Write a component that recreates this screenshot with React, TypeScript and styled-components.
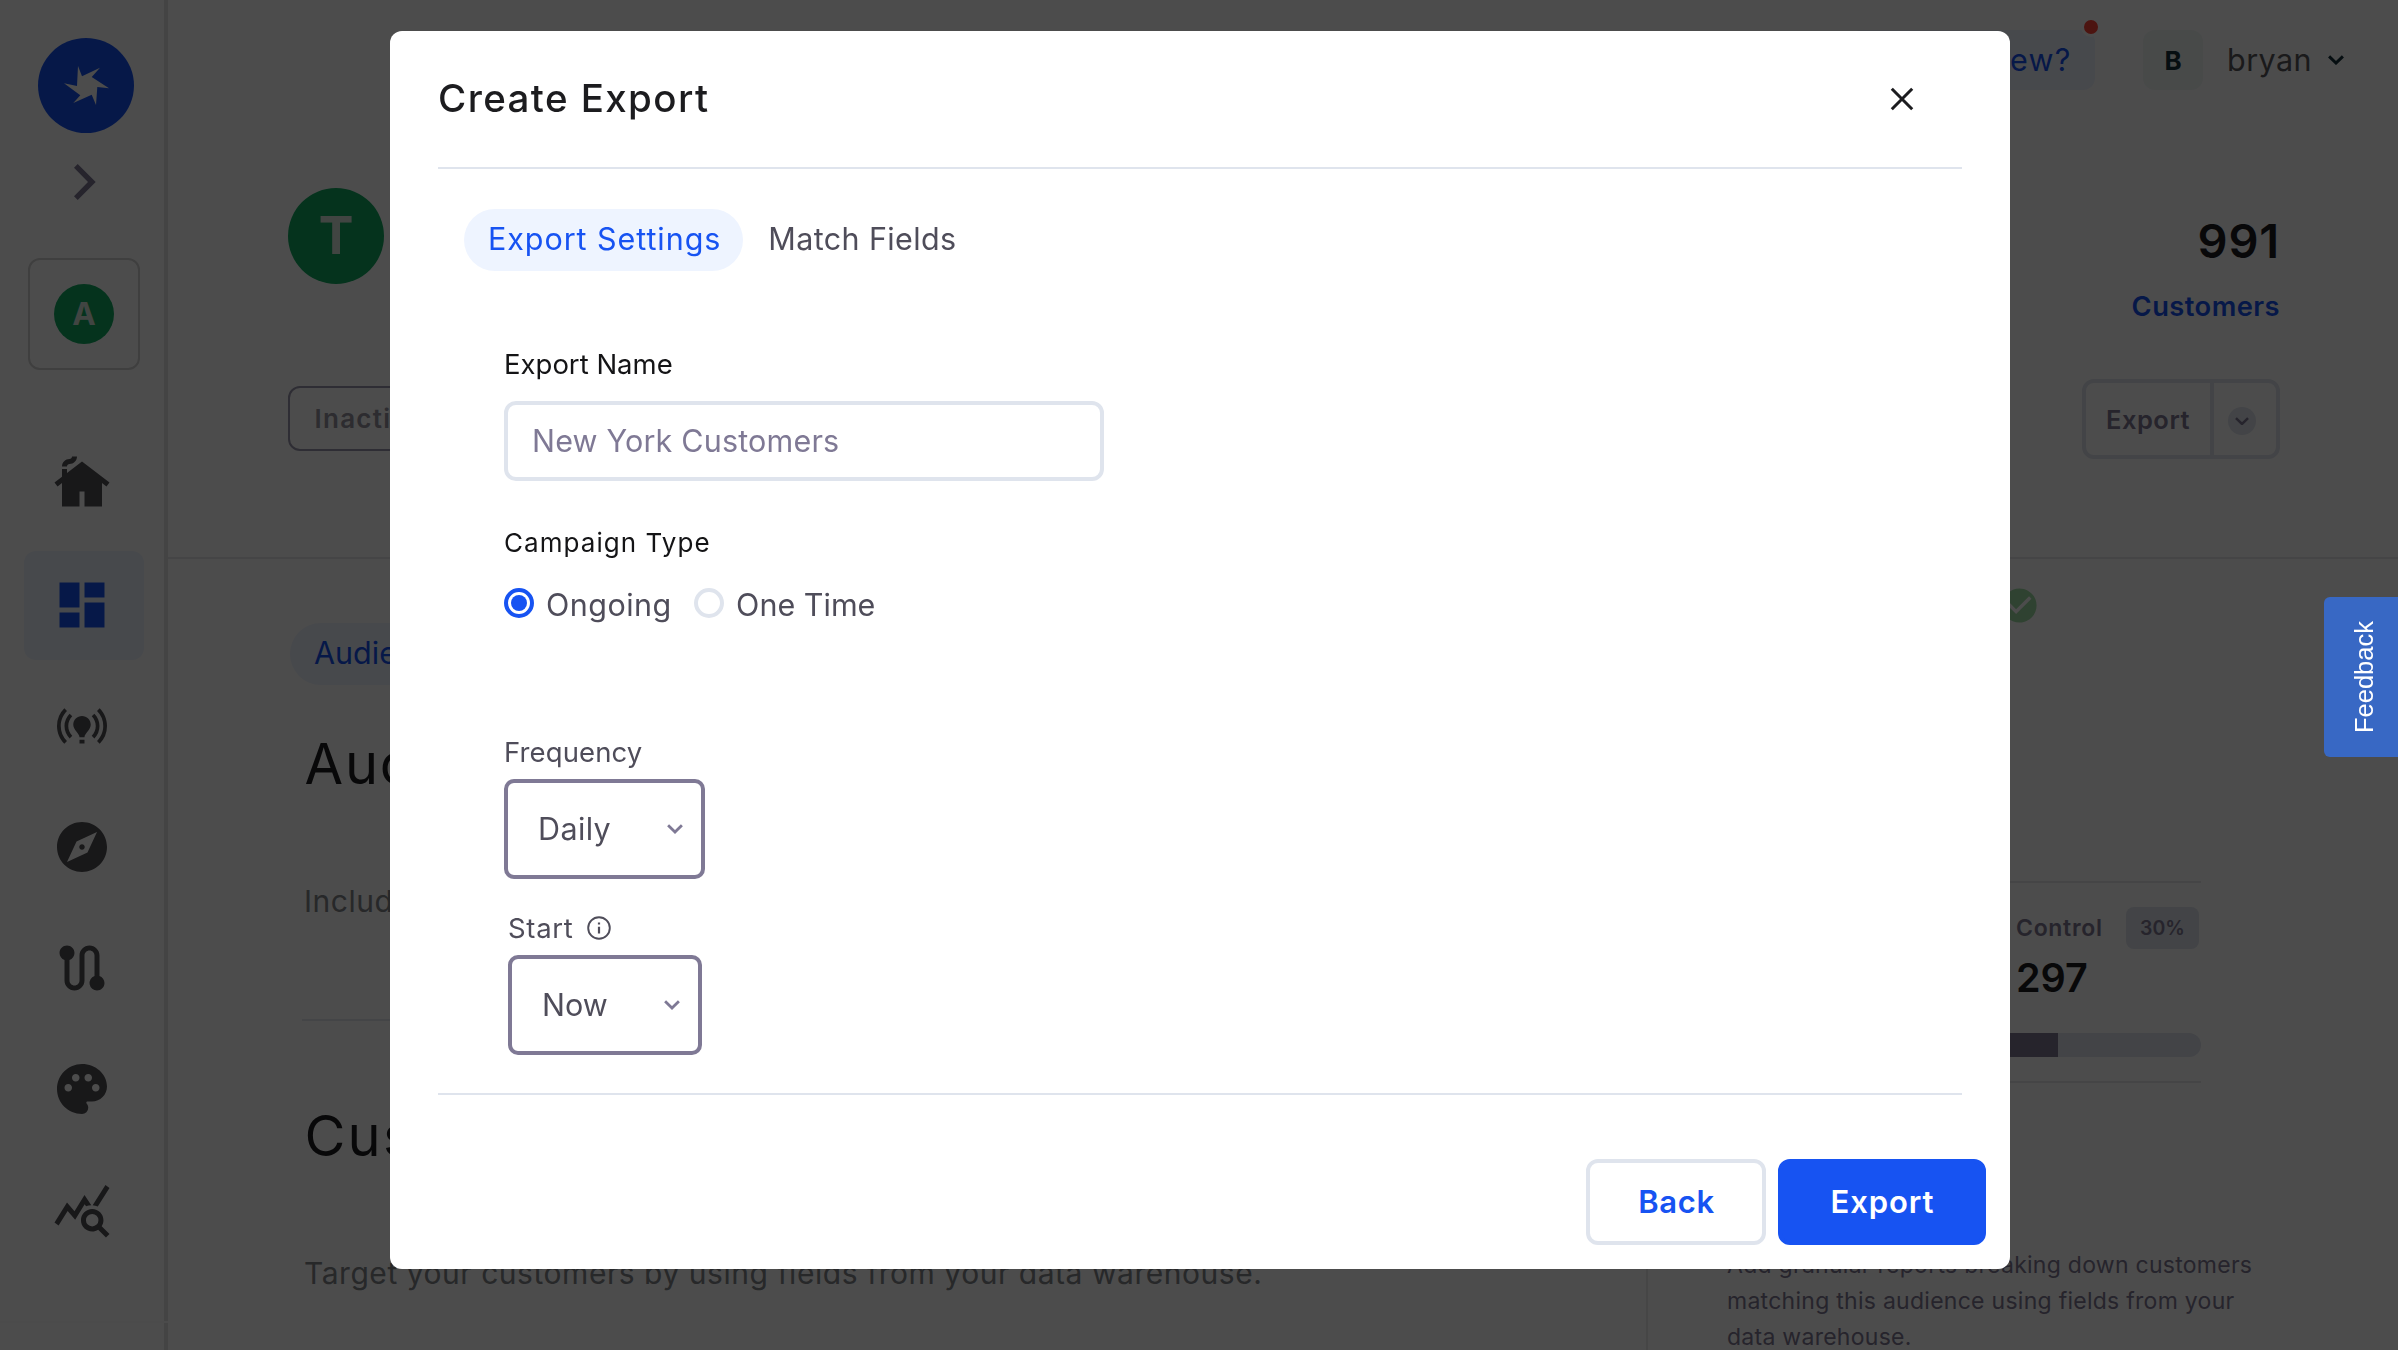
import React from "react";
import styled, { createGlobalStyle, css } from "styled-components";
import {
  MdCheckCircle,
  MdCottage,
  MdDashboard,
  MdExplore,
  MdOnlinePrediction,
  MdPalette,
  MdQueryStats,
  MdRoute,
} from "react-icons/md";

const color = {
  blue: "#1753f2",
  paleBlue: "#eef4ff",
  green: "#11aa61",
  ink: "#1c1c1f",
  text: "#4f4d5a",
  muted: "#7f7995",
  grey: "#82858b",
  line: "#dfe4ed",
  softLine: "#e6e8ea",
};

const Global = createGlobalStyle`
  *, *::before, *::after { box-sizing: border-box; }
  body {
    margin: 0;
    background: #fff;
    font-family: Inter, Roboto, "Liberation Sans", sans-serif;
    overflow: hidden;
  }
  button, input {
    font-family: inherit;
    margin: 0;
    padding: 0;
    border: 0;
    background: none;
    outline: none;
  }
  svg { display: block; flex: none; }
`;

const type = css<{ $track?: number }>`
  letter-spacing: ${(p) => p.$track ?? 0}px;
  white-space: nowrap;
`;

const Shell = styled.div`
  display: flex;
  width: 2398px;
  height: 1350px;
  overflow: hidden;
`;

/* ---------- Sidebar ---------- */

const Sidebar = styled.aside`
  flex: none;
  width: 168px;
  display: flex;
  flex-direction: column;
  border-right: 4px solid #e4e4e4;
`;

const Logo = styled.div`
  margin: 38px 0 0 38px;
  width: 96px;
  height: 95px;
`;

const ExpandButton = styled.button`
  margin: 31px 0 0 74px;
  width: 22px;
  height: 36px;
`;

const Workspace = styled.div`
  margin: 58px 0 0 28px;
  width: 112px;
  height: 112px;
  border: 2px solid #d2d2d2;
  border-radius: 12px;
  display: flex;
  align-items: center;
  justify-content: center;
`;

const Avatar = styled.div<{ $size: number; $font: number }>`
  width: ${(p) => p.$size}px;
  height: ${(p) => p.$size}px;
  border-radius: 50%;
  background: ${color.green};
  color: #dbe6de;
  font-size: ${(p) => p.$font}px;
  line-height: ${(p) => p.$size}px;
  font-weight: 700;
  text-align: center;
`;

const Nav = styled.nav`
  display: flex;
  flex-direction: column;
  gap: 12px;
  margin: 60px 0 0 24px;
  flex: 1;
`;

const NavItem = styled.a<{ $active?: boolean }>`
  width: 120px;
  height: 109px;
  padding: 0 4px 2px 0;
  border-radius: 12px;
  display: flex;
  align-items: center;
  justify-content: center;
  font-size: 60px;
  color: ${(p) => (p.$active ? color.blue : "#525156")};
  background: ${(p) => (p.$active ? color.paleBlue : "transparent")};
`;

const SidebarFooter = styled.div`
  height: 29px;
  margin-right: -4px;
  border-top: 2px solid #fafafa;
`;

/* ---------- Page behind the dialog ---------- */

const Main = styled.main`
  flex: 1;
  min-width: 0;
  display: flex;
  flex-direction: column;
`;

const TopBar = styled.header`
  flex: none;
  height: 120px;
  padding: 30px 54px 30px 0;
  display: flex;
  justify-content: flex-end;
  align-items: center;
`;

const NewsPill = styled.div`
  position: relative;
  height: 60px;
  margin-right: 48px;
  padding: 0 23.5px 0 24px;
  border-radius: 12px;
  background: ${color.paleBlue};
  color: ${color.blue};
  font-size: 30.5px;
  line-height: 60px;
  ${type}
`;

const NewsDot = styled.span`
  position: absolute;
  top: -13px;
  right: -6px;
  width: 20px;
  height: 20px;
  border-radius: 50%;
  border: 3px solid #fff;
  background: #ff4336;
`;

const Initial = styled.div`
  width: 60px;
  height: 60px;
  margin-right: 24px;
  border-radius: 12px;
  background: #f1f7f6;
  color: #14303a;
  font-size: 26px;
  font-weight: 700;
  line-height: 61px;
  text-align: center;
`;

const UserName = styled.div`
  width: 101px;
  font-size: 30.5px;
  line-height: 60px;
  color: #59585c;
  ${type}
`;

const Hero = styled.section`
  flex: none;
  height: 439px;
  padding: 68px 118px 0 120px;
  border-bottom: 2px solid ${color.softLine};
  display: flex;
  justify-content: space-between;
`;

const StatusBadge = styled.div`
  height: 65px;
  margin-top: 102px;
  padding: 0 24px 0 24.5px;
  border: 2px solid #9a98ad;
  border-radius: 12px;
  color: #9694a0;
  font-size: 26px;
  font-weight: 600;
  line-height: 61px;
  ${type}
`;

const HeroSummary = styled.div`
  display: flex;
  flex-direction: column;
  align-items: flex-end;
`;

const Total = styled.div`
  margin-top: 25px;
  font-size: 47px;
  font-weight: 600;
  line-height: 56px;
  color: ${color.ink};
  ${type}
`;

const TotalLabel = styled.div`
  margin: 22px 0 56px;
  font-size: 27.3px;
  font-weight: 600;
  line-height: 32px;
  color: ${color.blue};
  ${type}
`;

const SplitButton = styled.div`
  display: flex;
  width: 198px;
  height: 80px;
  border: 4px solid ${color.line};
  border-radius: 12px;
`;

const SplitMain = styled.div`
  width: 124px;
  font-size: 25.5px;
  font-weight: 600;
  line-height: 73px;
  text-align: center;
  color: ${color.muted};
  ${type}
`;

const SplitMore = styled.div`
  flex: 1;
  display: flex;
  align-items: center;
  justify-content: center;
  padding: 4px 6px 0 0;
  border-left: 4px solid ${color.line};
`;

const MoreCircle = styled.div`
  width: 28px;
  height: 28px;
  border-radius: 50%;
  background: ${color.line};
  display: flex;
  align-items: center;
  justify-content: center;
`;

const Body = styled.div`
  flex: 1;
  min-height: 0;
  display: flex;
`;

const Builder = styled.section`
  width: 1480px;
  padding: 64px 0 0 122px;
  border-right: 2px solid #e9e9ec;
`;

const PageTab = styled.div`
  display: inline-block;
  height: 62px;
  padding: 0 24px;
  border-radius: 31px;
  background: ${color.paleBlue};
  color: ${color.blue};
  font-size: 30.5px;
  line-height: 60px;
  vertical-align: top;
  ${type}
`;

const SectionTitle = styled.h2<{ $top: number }>`
  margin: ${(p) => p.$top}px 0 0 14.5px;
  font-size: 56px;
  font-weight: 400;
  line-height: 70px;
  color: ${color.ink};
  ${type}
`;

const SectionText = styled.p`
  margin: 84px 0 0 14px;
  font-size: 30px;
  line-height: 36px;
  color: ${color.grey};
  ${type}
`;

const SectionRule = styled.hr`
  margin: 100px 48px 0 12px;
  border: 0;
  height: 2px;
  background: #e4e6ee;
`;

const Aside = styled.aside`
  flex: 1;
  padding: 26px 0 0 79px;
`;

const CheckRow = styled.div`
  padding-left: 272px;
  font-size: 41px;
  color: #9fdca4;
`;

const Split = styled.div`
  width: 474px;
  margin-top: 255px;
  padding: 24px 0;
  border: solid ${color.softLine};
  border-width: 2px 0;
`;

const Control = styled.div`
  width: 183px;
  margin-left: 289px;
`;

const ControlHead = styled.div`
  display: flex;
  align-items: center;
  justify-content: space-between;
`;

const ControlLabel = styled.span`
  font-size: 23px;
  font-weight: 600;
  line-height: 42px;
  color: ${color.muted};
  ${type}
`;

const Percent = styled.span`
  width: 73px;
  height: 42px;
  border-radius: 8px;
  background: ${color.line};
  color: ${color.muted};
  font-size: 19.5px;
  font-weight: 600;
  line-height: 42px;
  text-align: center;
  ${type}
`;

const ControlCount = styled.div`
  margin-top: 6px;
  font-size: 39.5px;
  font-weight: 600;
  line-height: 46px;
  color: ${color.ink};
  ${type}
`;

const Track = styled.div`
  height: 24px;
  margin-top: 32px;
  border-radius: 12px;
  background: ${color.line};
  overflow: hidden;
`;

const Fill = styled.div`
  width: 331px;
  height: 100%;
  background: ${color.muted};
`;

const Hint = styled.p`
  width: 560px;
  margin: 164px 0 0;
  font-size: 23px;
  line-height: 36px;
  color: ${color.muted};
  ${type}
`;

/* ---------- Dialog ---------- */

const Backdrop = styled.div`
  position: fixed;
  inset: 0;
  background: rgba(0, 0, 0, 0.7);
  display: flex;
  justify-content: center;
  align-items: flex-start;
  padding: 31px 0 0 2px;
`;

const Dialog = styled.div`
  width: 1620px;
  height: 1238px;
  border-radius: 12px;
  background: #fff;
`;

const DialogHeader = styled.header`
  height: 136px;
  padding: 0 96px 0 48px;
  display: flex;
  align-items: center;
  justify-content: space-between;
`;

const DialogTitle = styled.h1`
  margin: 0;
  padding-bottom: 2px;
  font-size: 38.5px;
  font-weight: 500;
  line-height: 44px;
  color: ${color.ink};
  ${type}
`;

const CloseButton = styled.button`
  width: 24px;
  height: 24px;
`;

const DialogRule = styled.hr`
  margin: 0 48px;
  border: 0;
  height: 2px;
  background: ${color.line};
`;

const Tabs = styled.div`
  display: flex;
  gap: 1px;
  padding: 40px 0 0 74px;
`;

const Tab = styled.button<{ $active?: boolean; $track?: number }>`
  height: 62px;
  padding: 0 22px 2px 24px;
  border-radius: 31px;
  font-size: 30.5px;
  line-height: 58px;
  color: ${(p) => (p.$active ? color.blue : color.text)};
  background: ${(p) => (p.$active ? color.paleBlue : "transparent")};
  ${type}
`;

const Form = styled.form`
  padding: 77px 0 38px 114px;
`;

const Label = styled.div<{ $soft?: boolean; $size?: number; $track?: number }>`
  display: flex;
  align-items: center;
  gap: 13.5px;
  font-size: ${(p) => p.$size ?? 27.5}px;
  line-height: 32px;
  color: ${(p) => (p.$soft ? color.text : "#141416")};
  ${type}
`;

const TextInput = styled.input`
  display: block;
  width: 600px;
  height: 80px;
  margin: 21px 0 46px;
  padding: 0 24px 2px;
  border: 4px solid ${color.line};
  border-radius: 12px;
  font-size: 30.5px;
  letter-spacing: 0.18px;
  &::placeholder {
    color: ${color.muted};
    opacity: 1;
  }
`;

const RadioRow = styled.div`
  display: flex;
  gap: 22.5px;
  margin: 29px 0 114px;
`;

const Option = styled.label`
  display: flex;
  gap: 12px;
  font-size: 30.5px;
  line-height: 34px;
  color: ${color.text};
  ${type}
`;

const Radio = styled.span<{ $checked?: boolean }>`
  width: 30px;
  height: 30px;
  border: 4px solid ${(p) => (p.$checked ? color.blue : color.line)};
  border-radius: 50%;
  display: flex;
  align-items: center;
  justify-content: center;
  &::after {
    content: "";
    width: 16px;
    height: 16px;
    border-radius: 50%;
    background: ${(p) => (p.$checked ? color.blue : "transparent")};
  }
`;

const StartField = styled.div`
  margin: 33px 0 0 4px;
`;

const Select = styled.div<{ $width: number; $track?: number }>`
  width: ${(p) => p.$width}px;
  height: 100px;
  margin-top: 11px;
  padding: 0 18px 0 30px;
  border: 4px solid ${color.muted};
  border-radius: 10px;
  display: flex;
  align-items: center;
  justify-content: space-between;
  font-size: 30.5px;
  color: ${color.text};
  ${type}
`;

const SelectValue = styled.span`
  padding-bottom: 2px;
`;

const DialogFooter = styled.footer`
  display: flex;
  justify-content: flex-end;
  gap: 12px;
  padding: 64px 24px 0 0;
`;

const Button = styled.button<{ $primary?: boolean; $track?: number }>`
  width: ${(p) => (p.$primary ? 208 : 180)}px;
  height: 86px;
  padding: 0 0 2px 1px;
  border: 4px solid ${(p) => (p.$primary ? color.blue : color.line)};
  border-radius: 12px;
  background: ${(p) => (p.$primary ? color.blue : "#fff")};
  color: ${(p) => (p.$primary ? "#fff" : color.blue)};
  font-size: 31px;
  font-weight: 600;
  text-align: center;
  ${type}
`;

const FeedbackTab = styled.button`
  position: fixed;
  top: 597px;
  right: 0;
  width: 74px;
  height: 160px;
  padding-left: 5px;
  border-radius: 6px 0 0 6px;
  background: #3868c4;
  display: flex;
  align-items: center;
  justify-content: center;
`;

const FeedbackText = styled.span`
  writing-mode: vertical-rl;
  transform: rotate(180deg);
  font-family: "Liberation Sans", Arial, sans-serif;
  font-size: 25.5px;
  line-height: 30px;
  color: #fff;
`;

/* ---------- Drawings ---------- */

const Chevron = ({ stroke, w = 16, sw = 2.8 }: { stroke: string; w?: number; sw?: number }) => (
  <svg width={w} height={(w * 10) / 16} viewBox="0 0 16 10" fill="none">
    <path d="M1.1 1.3 8 8 14.9 1.3" stroke={stroke} strokeWidth={sw} />
  </svg>
);

const LogoMark = () => (
  <svg width="96" height="95" viewBox="38 38 96 95">
    <ellipse cx="86" cy="85.5" rx="48" ry="47.5" fill={color.blue} />
    <path
      d="M78 66 82 76.3 100 67.8 91.7 77 109 88.3 97.3 87 96 105 91.7 94.7 73.3 103 80.3 95.3 64 83.3 77 86Z"
      fill="#fff"
    />
  </svg>
);

const nav = [
  { id: "home", Icon: MdCottage },
  { id: "audiences", Icon: MdDashboard, active: true },
  { id: "predictions", Icon: MdOnlinePrediction },
  { id: "explore", Icon: MdExplore },
  { id: "journeys", Icon: MdRoute },
  { id: "creative", Icon: MdPalette },
  { id: "insights", Icon: MdQueryStats },
];

export default function App() {
  return (
    <>
      <Global />
      <Shell>
        <Sidebar>
          <Logo>
            <LogoMark />
          </Logo>
          <ExpandButton>
            <svg width="22" height="36" viewBox="0 0 22 36">
              <path d="M3.7 0 21.7 18 3.7 36 0 32.3 14 18 0 3.7Z" fill={color.muted} />
            </svg>
          </ExpandButton>
          <Workspace>
            <Avatar $size={60} $font={31.5}>A</Avatar>
          </Workspace>
          <Nav>
            {nav.map(({ id, Icon, active }) => (
              <NavItem key={id} $active={active}>
                <Icon />
              </NavItem>
            ))}
          </Nav>
          <SidebarFooter />
        </Sidebar>

        <Main>
          <TopBar>
            <NewsPill $track={1.2}>
              What's new?
              <NewsDot />
            </NewsPill>
            <Initial>B</Initial>
            <UserName $track={0.45}>bryan</UserName>
            <Chevron stroke="#14303a" sw={3} />
          </TopBar>

          <Hero>
            <div>
              <Avatar $size={96} $font={52}>T</Avatar>
              <StatusBadge $track={1.26}>Inactive</StatusBadge>
            </div>
            <HeroSummary>
              <Total $track={0.8}>991</Total>
              <TotalLabel $track={0.45}>Customers</TotalLabel>
              <SplitButton>
                <SplitMain $track={0.5}>Export</SplitMain>
                <SplitMore>
                  <MoreCircle>
                    <Chevron stroke={color.muted} w={14} />
                  </MoreCircle>
                </SplitMore>
              </SplitButton>
            </HeroSummary>
          </Hero>

          <Body>
            <Builder>
              <PageTab>Audience</PageTab>
              <SectionTitle $top={44} $track={1.8}>Audience</SectionTitle>
              <SectionText $track={0.54}>Includes</SectionText>
              <SectionRule />
              <SectionTitle $top={80} $track={2.2}>Customers</SectionTitle>
              <SectionText $track={0.54}>
                Target your customers by using fields from your data warehouse.
              </SectionText>
            </Builder>
            <Aside>
              <CheckRow>
                <MdCheckCircle />
              </CheckRow>
              <Split>
                <Control>
                  <ControlHead>
                    <ControlLabel $track={0.7}>Control</ControlLabel>
                    <Percent>30%</Percent>
                  </ControlHead>
                  <ControlCount>297</ControlCount>
                </Control>
                <Track>
                  <Fill />
                </Track>
              </Split>
              <Hint $track={0.27}>
                Add granular reports breaking down customers
                <br />
                matching this audience using fields from your
                <br />
                data warehouse.
              </Hint>
            </Aside>
          </Body>
        </Main>
      </Shell>

      <Backdrop>
        <Dialog role="dialog">
          <DialogHeader>
            <DialogTitle $track={1.4}>Create Export</DialogTitle>
            <CloseButton>
              <svg width="24" height="24" viewBox="0 0 24 24" fill="none">
                <path d="M1.8 1.8 22.2 22.2M22.2 1.8 1.8 22.2" stroke={color.ink} strokeWidth="3" />
              </svg>
            </CloseButton>
          </DialogHeader>
          <DialogRule />
          <Tabs>
            <Tab $active $track={0.94}>Export Settings</Tab>
            <Tab $track={0.36}>Match Fields</Tab>
          </Tabs>
          <Form>
            <Label>Export Name</Label>
            <TextInput placeholder="New York Customers" />
            <Label $size={26} $track={1.06}>Campaign Type</Label>
            <RadioRow>
              <Option $track={0.45}>
                <Radio $checked />
                Ongoing
              </Option>
              <Option>
                <Radio />
                One Time
              </Option>
            </RadioRow>
            <Label $soft $track={0.12}>Frequency</Label>
            <Select $width={201} $track={0.37}>
              <SelectValue>Daily</SelectValue>
              <Chevron stroke={color.muted} />
            </Select>
            <StartField>
              <Label $soft $track={0.7}>
                Start
                <svg width="24" height="24" viewBox="0 0 24 24" fill="none" stroke={color.text}>
                  <circle cx="12" cy="12" r="10.8" strokeWidth="1.9" />
                  <path d="M12 6.4v2.2M12 10.8v6.8" strokeWidth="2.2" />
                </svg>
              </Label>
              <Select $width={194}>
                <SelectValue>Now</SelectValue>
                <Chevron stroke={color.muted} />
              </Select>
            </StartField>
          </Form>
          <DialogRule />
          <DialogFooter>
            <Button $track={0.6}>Back</Button>
            <Button $primary $track={0.9}>Export</Button>
          </DialogFooter>
        </Dialog>
      </Backdrop>

      <FeedbackTab>
        <FeedbackText>Feedback</FeedbackText>
      </FeedbackTab>
    </>
  );
}
